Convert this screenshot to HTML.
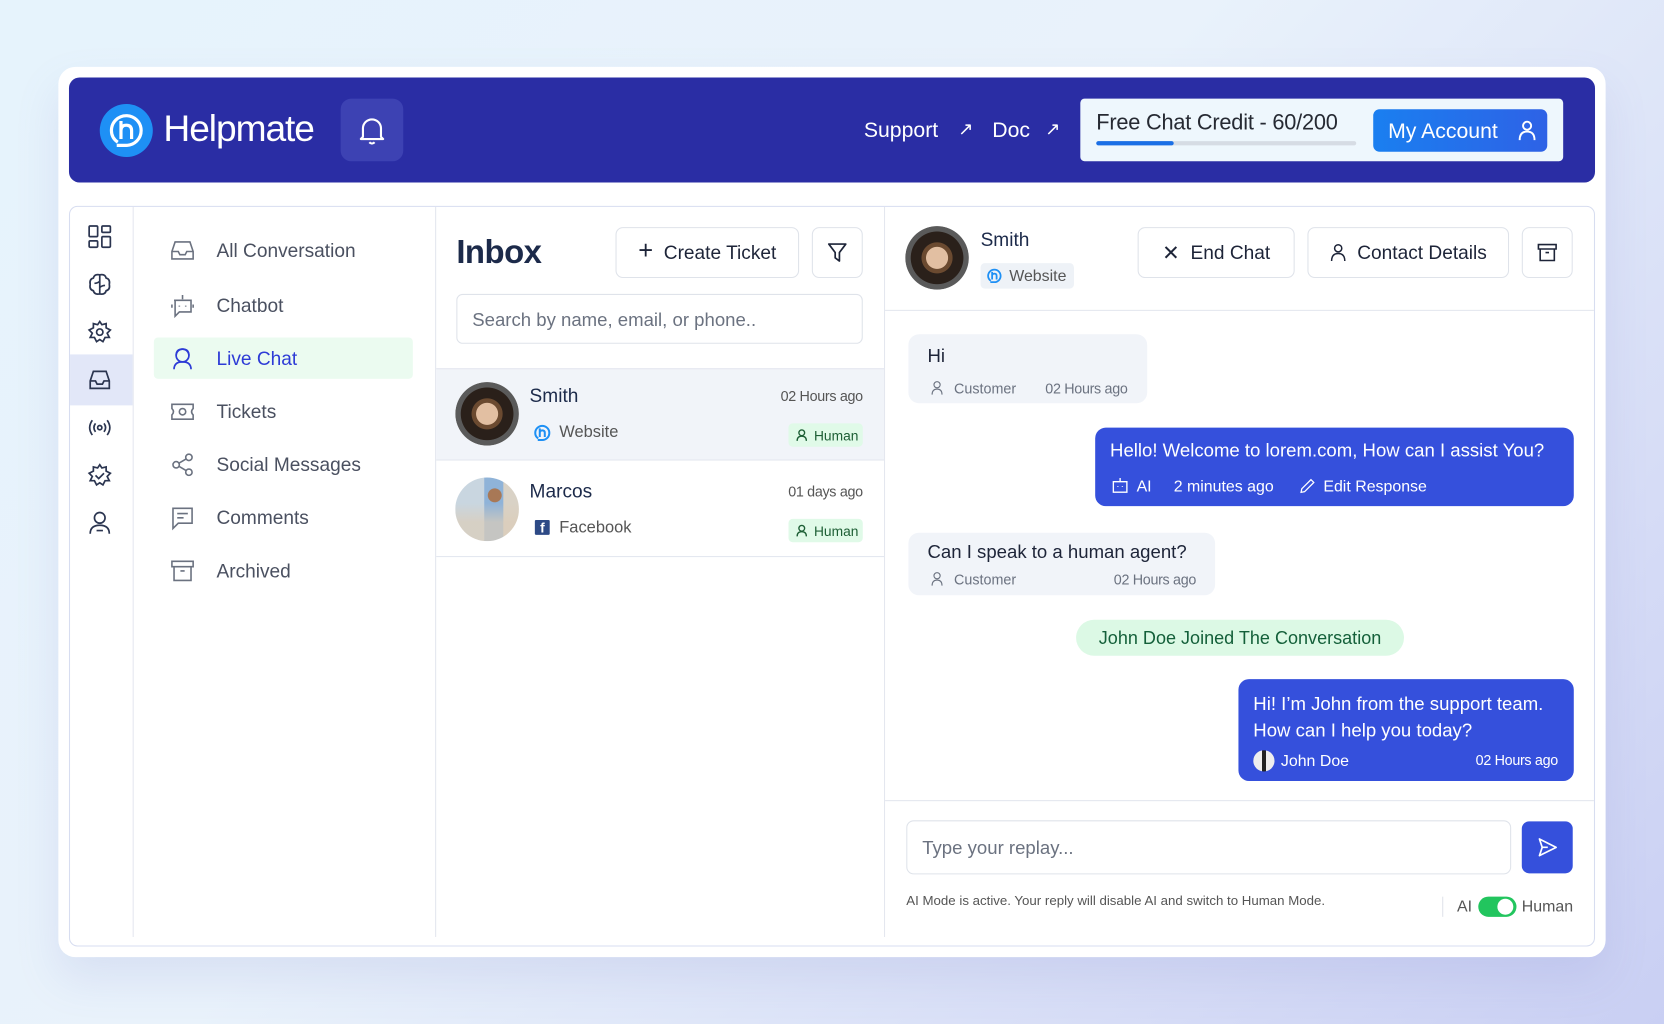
<!DOCTYPE html>
<html><head><meta charset="utf-8"><style>
*{box-sizing:border-box;margin:0;padding:0}
html,body{width:1664px;height:1024px;overflow:hidden}
body{font-family:"Liberation Sans",sans-serif;background:linear-gradient(135deg,#e6f3fc 0%,#e9f2fb 45%,#d6dcf6 80%,#c9cff3 100%)}
#s{position:absolute;left:0;top:0;width:1568px;height:965px;transform:scale(1.06122,1.06114);transform-origin:0 0}
.a{position:absolute}
.card{left:55px;top:63px;width:1458px;height:839px;background:#fff;border-radius:16px;box-shadow:0 20px 40px rgba(120,130,200,.15)}
.hdr{left:65px;top:73px;width:1438px;height:99px;background:#2a2da4;border-radius:10px}
.wt{color:#fff}
.btn{position:absolute;border:1px solid #dfe3ea;border-radius:7px;background:#fff;display:flex;align-items:center;justify-content:center;gap:10px;font-size:18px;color:#1d2438}
.nav{position:absolute;left:204px;font-size:18px;color:#4a5060}
.ni{position:absolute;left:160px;width:24px;height:24px}
.ri{position:absolute;left:82px;width:24px;height:24px}
svg{display:block}
.bub{position:absolute;border-radius:10px}
.meta{font-size:13.5px;color:#6b7280}
.rt{text-align:right}
</style></head><body><div id="s">
<div class="a card"></div>
<div class="a hdr"></div>
<div class="a" style="left:94px;top:98px;width:50px;height:50px;border-radius:50%;background:#1e90f5"></div>
<svg class="a" style="left:100px;top:104px" width="38" height="38" viewBox="0 0 38 38"><path d="M11 30 Q5 26 5 19 A14 14 0 1 1 19 33 L10 33" fill="none" stroke="#fff" stroke-width="3"/><path d="M14 10 V27 M14 19 Q14 14 19 14 Q24 14 24 19 V27" fill="none" stroke="#fff" stroke-width="3"/></svg>
<div class="a wt" style="left:154px;top:102px;font-size:35px;letter-spacing:-1px">Helpmate</div>
<div class="a" style="left:321px;top:93px;width:59px;height:59px;border-radius:10px;background:#3d42b3"></div>
<svg class="a" style="left:337px;top:108px" width="27" height="29" viewBox="0 0 27 29"><path d="M5 21 V13 A8.5 8.5 0 0 1 22 13 V21 L24 23 H3 Z M11 26 Q13.5 28.5 16 26" fill="none" stroke="#fff" stroke-width="2" stroke-linejoin="round"/></svg>
<div class="a wt" style="left:814px;top:112px;font-size:20px">Support</div>
<div class="a wt" style="left:903px;top:112px;font-size:17px">↗</div>
<div class="a wt" style="left:935px;top:112px;font-size:20px">Doc</div>
<div class="a wt" style="left:985px;top:112px;font-size:17px">↗</div>
<div class="a" style="left:1018px;top:93px;width:455px;height:59px;background:#eef7fd;border-radius:4px"></div>
<div class="a" style="left:1033px;top:104px;font-size:20.5px;color:#262a33;letter-spacing:-.2px">Free Chat Credit - 60/200</div>
<div class="a" style="left:1033px;top:133px;width:245px;height:4px;background:#d6dce4;border-radius:2px"></div>
<div class="a" style="left:1033px;top:133px;width:73px;height:4px;background:#1a6fe6;border-radius:2px"></div>
<div class="a" style="left:1294px;top:103px;width:164px;height:40px;border-radius:6px;background:linear-gradient(90deg,#1a7ff0,#2e62e6);color:#fff;font-size:20px;padding:10px 0 0 14px">My Account</div>
<svg class="a" style="left:1430px;top:113px" width="18" height="20" viewBox="0 0 18 20"><circle cx="9" cy="5.5" r="3.8" fill="none" stroke="#fff" stroke-width="1.8"/><path d="M2 19 Q2 11 9 11 Q16 11 16 19" fill="none" stroke="#fff" stroke-width="1.8"/></svg>

<div class="a" style="left:65px;top:194px;width:1438px;height:698px;border:1.5px solid #d7ddf0;border-radius:8px"></div>
<div class="a" style="left:125px;top:195px;width:1px;height:688px;background:#e4e7ef"></div>
<div class="a" style="left:410px;top:195px;width:1px;height:688px;background:#e4e7ef"></div>
<div class="a" style="left:833px;top:195px;width:1px;height:688px;background:#e4e7ef"></div>
<div class="a" style="left:66px;top:334px;width:59px;height:48px;background:#e2e7f8"></div>
<svg class="ri" style="top:211px" viewBox="0 0 24 24" fill="none" stroke="#2b3550" stroke-width="1.6"><rect x="2" y="2" width="8" height="10" rx="1"/><rect x="14" y="2" width="8" height="6" rx="1"/><rect x="2" y="16" width="8" height="6" rx="1"/><rect x="14" y="12" width="8" height="10" rx="1"/></svg>
<svg class="ri" style="top:256px" viewBox="0 0 24 24" fill="none" stroke="#2b3550" stroke-width="1.6"><path d="M12 3 V21 M12 3 Q7 2 6 6 Q2 7 3 12 Q2 17 6 18 Q7 22 12 21 Q17 22 18 18 Q22 17 21 12 Q22 7 18 6 Q17 2 12 3 M7 11 Q10 11 12 9 M17 13 Q14 13 12 15"/></svg>
<svg class="ri" style="top:301px" viewBox="0 0 24 24" fill="none" stroke="#2b3550" stroke-width="1.6"><path d="M12 2 L14 5 L18 4 L18 8 L22 10 L19 13 L21 17 L17 17 L15 21 L12 19 L9 21 L7 17 L3 17 L5 13 L2 10 L6 8 L6 4 L10 5 Z"/><circle cx="12" cy="12" r="3"/></svg>
<svg class="ri" style="top:346px" viewBox="0 0 24 24" fill="none" stroke="#2b3550" stroke-width="1.6"><path d="M3 13 L6 4 H18 L21 13 V20 H3 Z M3 13 H8 L9.5 16 H14.5 L16 13 H21"/></svg>
<svg class="ri" style="top:391px" viewBox="0 0 24 24" fill="none" stroke="#2b3550" stroke-width="1.6"><circle cx="12" cy="12" r="2"/><path d="M8 8 Q5 12 8 16 M16 8 Q19 12 16 16 M5 5 Q0 12 5 19 M19 5 Q24 12 19 19"/></svg>
<svg class="ri" style="top:436px" viewBox="0 0 24 24" fill="none" stroke="#2b3550" stroke-width="1.6"><path d="M12 2 L14 5 L18 4 L18 8 L22 10 L19 13 L21 17 L17 17 L15 21 L12 19 L9 21 L7 17 L3 17 L5 13 L2 10 L6 8 L6 4 L10 5 Z M8 12 L11 15 L16 10"/></svg>
<svg class="ri" style="top:481px" viewBox="0 0 24 24" fill="none" stroke="#2b3550" stroke-width="1.6"><circle cx="12" cy="7" r="5"/><path d="M3 22 Q3 14 12 14 Q21 14 21 22 M9 19 H15"/></svg>

<div class="a" style="left:145px;top:318px;width:244px;height:39px;background:#ebfbf0;border-radius:4px"></div>
<svg class="ni" style="top:224px" viewBox="0 0 24 24" fill="none" stroke="#6b7280" stroke-width="1.5"><path d="M2 13 L5 4 H19 L22 13 V20 H2 Z M2 13 H8 L9.5 16 H14.5 L16 13 H22"/></svg>
<div class="nav" style="top:226px">All Conversation</div>
<svg class="ni" style="top:276px" viewBox="0 0 24 24" fill="none" stroke="#6b7280" stroke-width="1.5"><path d="M12 2 V6 M4 7 H20 V18 H9 L5 22 V7 Z M9 12 V13 M15 12 V13 M2 11 V14 M22 11 V14"/></svg>
<div class="nav" style="top:278px">Chatbot</div>
<svg class="ni" style="top:326px" viewBox="0 0 24 24" fill="none" stroke="#2d3bd6" stroke-width="1.6"><circle cx="12" cy="9" r="6"/><path d="M4 22 Q4 15 12 15 Q20 15 20 22 M6 9 Q6 3 12 3 Q18 3 18 9"/></svg>
<div class="nav" style="top:328px;color:#2d3bd6">Live Chat</div>
<svg class="ni" style="top:376px" viewBox="0 0 24 24" fill="none" stroke="#6b7280" stroke-width="1.5"><path d="M2 5 H22 V9 Q19 12 22 15 V19 H2 V15 Q5 12 2 9 Z"/><circle cx="12" cy="12" r="3"/></svg>
<div class="nav" style="top:378px">Tickets</div>
<svg class="ni" style="top:426px" viewBox="0 0 24 24" fill="none" stroke="#6b7280" stroke-width="1.5"><circle cx="18" cy="5" r="3"/><circle cx="6" cy="12" r="3"/><circle cx="18" cy="19" r="3"/><path d="M8.6 10.5 L15.4 6.5 M8.6 13.5 L15.4 17.5"/></svg>
<div class="nav" style="top:428px">Social Messages</div>
<svg class="ni" style="top:476px" viewBox="0 0 24 24" fill="none" stroke="#6b7280" stroke-width="1.5"><path d="M3 3 H21 V17 H8 L3 22 Z M7 8 H17 M7 12 H13"/></svg>
<div class="nav" style="top:478px">Comments</div>
<svg class="ni" style="top:526px" viewBox="0 0 24 24" fill="none" stroke="#6b7280" stroke-width="1.5"><path d="M2 3 H22 V8 H2 Z M4 8 V21 H20 V8 M10 12 H14"/></svg>
<div class="nav" style="top:528px">Archived</div>

<div class="a" style="left:430px;top:220px;font-size:31px;font-weight:bold;color:#1c2a4a;letter-spacing:-.5px">Inbox</div>
<div class="btn" style="left:580px;top:214px;width:173px;height:48px"><span style="font-size:24px;font-weight:300;margin-top:-3px">+</span>Create Ticket</div>
<div class="btn" style="left:765px;top:214px;width:48px;height:48px"><svg width="20" height="20" viewBox="0 0 20 20"><path d="M2 2 H18 L12 10 V18 L8 15 V10 Z" fill="none" stroke="#1d2438" stroke-width="1.6" stroke-linejoin="round"/></svg></div>
<div class="a" style="left:430px;top:277px;width:383px;height:47px;border:1px solid #dfe3ea;border-radius:6px;font-size:17.5px;color:#6b7280;padding:13px 0 0 14px">Search by name, email, or phone..</div>
<div class="a" style="left:411px;top:347px;width:422px;height:87px;background:#f1f4f9;border-top:1px solid #e4e7ef;border-bottom:1px solid #e4e7ef"></div>
<div class="a" style="left:411px;top:524px;width:422px;height:1px;background:#e4e7ef"></div>
<div class="a" style="left:429px;top:360px;width:60px;height:60px;border-radius:50%;background:radial-gradient(circle at 50% 50%,#e2bfa2 0 24%,#6b4a30 25% 34%,#2a201a 35% 58%,#5a5a5a 59% 70%,#d8d8d8 71%)"></div>
<div class="a" style="left:429px;top:450px;width:60px;height:60px;border-radius:50%;background:radial-gradient(circle at 62% 28%,#a87856 0 11%,transparent 12%),linear-gradient(180deg,transparent 0 40%,rgba(220,205,185,.7) 70%),linear-gradient(90deg,#c9d6e0 0 45%,#8fb3d8 46% 75%,#d9d2c6 76%)"></div>
<div class="a" style="left:499px;top:363px;font-size:18px;color:#1c2a4a">Smith</div>
<div class="a meta rt" style="left:700px;width:113px;top:366px;color:#555;letter-spacing:-.3px">02 Hours ago</div>
<svg class="a" style="left:502px;top:399px" width="18" height="18" viewBox="0 0 38 38"><path d="M11 30 Q5 26 5 19 A14 14 0 1 1 19 33 L10 33" fill="none" stroke="#1e90f5" stroke-width="4"/><path d="M14 10 V27 M14 19 Q14 14 19 14 Q24 14 24 19 V27" fill="none" stroke="#1e90f5" stroke-width="4"/></svg>
<div class="a" style="left:527px;top:399px;font-size:15.5px;color:#555">Website</div>
<div class="a" style="left:743px;top:399px;width:70px;height:22px;background:#e0fae8;border-radius:4px;font-size:13px;color:#1d5f35;padding:4px 0 0 24px">Human</div>
<svg class="a" style="left:749px;top:403px" width="13" height="14" viewBox="0 0 24 24" fill="none" stroke="#1d5f35" stroke-width="2.4"><circle cx="12" cy="8" r="5"/><path d="M4 22 Q4 14 12 14 Q20 14 20 22"/></svg>
<div class="a" style="left:499px;top:453px;font-size:18px;color:#1c2a4a">Marcos</div>
<div class="a meta rt" style="left:700px;width:113px;top:456px;color:#555;letter-spacing:-.3px">01 days ago</div>
<div class="a" style="left:504px;top:490px;width:14px;height:14px;background:#2d4a86;border-radius:1px;color:#fff;font-size:13px;font-weight:bold;padding-left:5px;line-height:16px">f</div>
<div class="a" style="left:527px;top:489px;font-size:15.5px;color:#555">Facebook</div>
<div class="a" style="left:743px;top:489px;width:70px;height:22px;background:#e0fae8;border-radius:4px;font-size:13px;color:#1d5f35;padding:4px 0 0 24px">Human</div>
<svg class="a" style="left:749px;top:493px" width="13" height="14" viewBox="0 0 24 24" fill="none" stroke="#1d5f35" stroke-width="2.4"><circle cx="12" cy="8" r="5"/><path d="M4 22 Q4 14 12 14 Q20 14 20 22"/></svg>

<div class="a" style="left:834px;top:292px;width:668px;height:1px;background:#e4e7ef"></div>
<div class="a" style="left:853px;top:213px;width:60px;height:60px;border-radius:50%;background:radial-gradient(circle at 50% 50%,#e2bfa2 0 24%,#6b4a30 25% 34%,#2a201a 35% 58%,#5a5a5a 59% 70%,#d8d8d8 71%)"></div>
<div class="a" style="left:924px;top:216px;font-size:18px;color:#1c2a4a">Smith</div>
<div class="a" style="left:924px;top:248px;width:88px;height:24px;background:#eef2f7;border-radius:4px;font-size:15px;color:#555;padding:4px 0 0 27px">Website</div>
<svg class="a" style="left:929px;top:252px" width="16" height="16" viewBox="0 0 38 38"><path d="M11 30 Q5 26 5 19 A14 14 0 1 1 19 33 L10 33" fill="none" stroke="#1e90f5" stroke-width="4"/><path d="M14 10 V27 M14 19 Q14 14 19 14 Q24 14 24 19 V27" fill="none" stroke="#1e90f5" stroke-width="4"/></svg>
<div class="btn" style="left:1072px;top:214px;width:148px;height:48px"><span style="font-size:20px;font-weight:300">✕</span>End Chat</div>
<div class="btn" style="left:1232px;top:214px;width:190px;height:48px"><svg width="16" height="18" viewBox="0 0 18 20"><circle cx="9" cy="5.5" r="3.8" fill="none" stroke="#1d2438" stroke-width="1.6"/><path d="M2 19 Q2 11 9 11 Q16 11 16 19" fill="none" stroke="#1d2438" stroke-width="1.6"/></svg>Contact Details</div>
<div class="btn" style="left:1434px;top:214px;width:48px;height:48px"><svg width="20" height="20" viewBox="0 0 24 24" fill="none" stroke="#1d2438" stroke-width="1.8"><path d="M2 3 H22 V8 H2 Z M4 8 V21 H20 V8 M10 12 H14"/></svg></div>

<div class="bub" style="left:856px;top:315px;width:225px;height:65px;background:#f1f4f9"></div>
<div class="a" style="left:874px;top:325px;font-size:17.5px;color:#1d2438">Hi</div>
<svg class="a" style="left:876px;top:358px" width="14" height="15" viewBox="0 0 24 24" fill="none" stroke="#6b7280" stroke-width="1.8"><circle cx="12" cy="7" r="5"/><path d="M4 23 Q4 14 12 14 Q20 14 20 23"/></svg>
<div class="a meta" style="left:899px;top:359px">Customer</div>
<div class="a meta" style="left:985px;top:359px;letter-spacing:-.3px">02 Hours ago</div>

<div class="bub" style="left:1032px;top:403px;width:451px;height:74px;background:#3550dc"></div>
<div class="a wt" style="left:1046px;top:414px;font-size:17.5px">Hello! Welcome to lorem.com, How can I assist You?</div>
<svg class="a" style="left:1047px;top:449px" width="17" height="17" viewBox="0 0 24 24" fill="none" stroke="#fff" stroke-width="1.8"><path d="M12 2 V6 M3 7 H21 V21 H3 Z M9 13 V14 M15 13 V14"/></svg>
<div class="a wt" style="left:1071px;top:450px;font-size:15px">AI</div>
<div class="a wt" style="left:1106px;top:450px;font-size:15px">2 minutes ago</div>
<svg class="a" style="left:1224px;top:450px" width="16" height="16" viewBox="0 0 24 24" fill="none" stroke="#fff" stroke-width="1.8"><path d="M3 21 L4 16 L17 3 L21 7 L8 20 Z"/></svg>
<div class="a wt" style="left:1247px;top:450px;font-size:15px">Edit Response</div>

<div class="bub" style="left:856px;top:502px;width:289px;height:59px;background:#f1f4f9"></div>
<div class="a" style="left:874px;top:510px;font-size:17.5px;color:#1d2438">Can I speak to a human agent?</div>
<svg class="a" style="left:876px;top:538px" width="14" height="15" viewBox="0 0 24 24" fill="none" stroke="#6b7280" stroke-width="1.8"><circle cx="12" cy="7" r="5"/><path d="M4 23 Q4 14 12 14 Q20 14 20 23"/></svg>
<div class="a meta" style="left:899px;top:539px">Customer</div>
<div class="a meta rt" style="left:1010px;width:117px;top:539px;letter-spacing:-.3px">02 Hours ago</div>

<div class="a" style="left:1014px;top:584px;width:309px;height:34px;border-radius:17px;background:#dcf9e5;color:#14603a;font-size:17px;text-align:center;padding-top:8px">John Doe Joined The Conversation</div>

<div class="bub" style="left:1167px;top:640px;width:316px;height:96px;background:#3550dc"></div>
<div class="a wt" style="left:1181px;top:651px;font-size:17.5px;line-height:25px">Hi! I’m John from the support team.<br>How can I help you today?</div>
<div class="a" style="left:1181px;top:707px;width:20px;height:20px;border-radius:50%;background:linear-gradient(90deg,#eee 0 40%,#222 41% 60%,#eee 61%)"></div>
<div class="a wt" style="left:1207px;top:709px;font-size:15px">John Doe</div>
<div class="a wt rt" style="left:1360px;width:108px;top:709px;font-size:13.5px;letter-spacing:-.3px">02 Hours ago</div>

<div class="a" style="left:834px;top:754px;width:668px;height:1px;background:#e4e7ef"></div>
<div class="a" style="left:854px;top:773px;width:570px;height:51px;border:1px solid #dfe3ea;border-radius:7px;font-size:17.5px;color:#6b7280;padding:15px 0 0 14px">Type your replay...</div>
<div class="a" style="left:1434px;top:774px;width:48px;height:49px;background:#3550dc;border-radius:7px"></div>
<svg class="a" style="left:1448px;top:788px" width="21" height="21" viewBox="0 0 24 24" fill="none" stroke="#fff" stroke-width="1.8" stroke-linejoin="round"><path d="M3 3 L21 12 L3 21 L6 12 Z M6 12 H12"/></svg>
<div class="a" style="left:854px;top:842px;font-size:12.5px;color:#555">AI Mode is active. Your reply will disable AI and switch to Human Mode.</div>
<div class="a" style="left:1359px;top:845px;width:1px;height:19px;background:#e0e3ea"></div>
<div class="a" style="left:1373px;top:846px;font-size:15px;color:#555">AI</div>
<div class="a" style="left:1393px;top:845px;width:36px;height:19px;border-radius:10px;background:#22c55e"></div>
<div class="a" style="left:1411px;top:847px;width:15px;height:15px;border-radius:50%;background:#fff"></div>
<div class="a" style="left:1434px;top:846px;font-size:15px;color:#555">Human</div>
</div></body></html>
